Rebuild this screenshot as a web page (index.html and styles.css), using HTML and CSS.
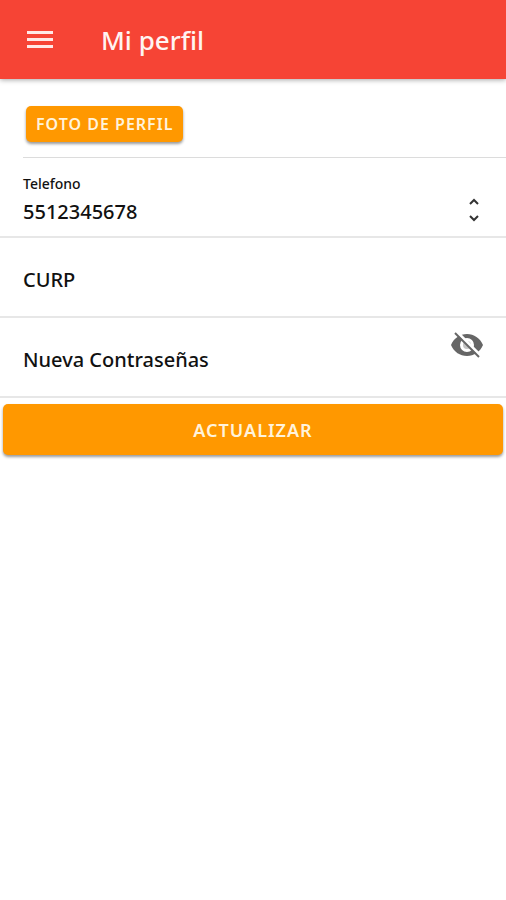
FILE: index.html
```html
<!DOCTYPE html>
<html lang="es">
<head>
<meta charset="utf-8">
<meta name="viewport" content="width=device-width, initial-scale=1">
<title>Mi perfil</title>
<link rel="stylesheet" href="styles.css">
</head>
<body>
<header class="toolbar">
  <button class="icon-button" type="button" aria-label="Menú">
    <svg width="26" height="18" viewBox="0 0 26 18" fill="currentColor" aria-hidden="true"><path d="M0 0h26v3H0zM0 7h26v3H0zM0 14h26v3H0z"/></svg>
  </button>
  <h1 class="title">Mi perfil</h1>
</header>
<main>
  <form>
    <div class="photo-row">
      <button class="button button-small" type="button">FOTO DE PERFIL</button>
    </div>
    <div class="row">
      <div class="stacked">
        <label class="caption" for="phone">Telefono</label>
        <input class="field" id="phone" type="text" inputmode="tel" value="5512345678">
      </div>
      <div class="stepper">
        <button class="icon-button" type="button" aria-label="Subir"><svg width="12" height="8" viewBox="0 0 12 8" aria-hidden="true"><path class="chevron" d="M2 6l4-4 4 4"/></svg></button>
        <button class="icon-button" type="button" aria-label="Bajar"><svg width="12" height="8" viewBox="0 0 12 8" aria-hidden="true"><path class="chevron" d="M2 2l4 4 4-4"/></svg></button>
      </div>
    </div>
    <div class="row">
      <label class="label" for="curp">CURP</label>
      <input class="field" id="curp" type="text">
    </div>
    <div class="row">
      <label class="label" for="password">Nueva Contraseñas</label>
      <input class="field" id="password" type="password">
      <button class="icon-button eye" type="button" aria-label="Mostrar contraseña">
        <svg width="32" height="28" viewBox="0 0 32 28" aria-hidden="true">
          <path fill="currentColor" fill-rule="evenodd" d="M0 14C3 7 9 3 16 3s13 4 16 11c-3 7-9 11-16 11S3 21 0 14zM16 7a7 7 0 1 0 0 14 7 7 0 0 0 0-14z"/>
          <circle cx="16" cy="14" r="4" fill="#c4c4c4"/>
          <path stroke="#fff" stroke-width="3" d="M6 1l24 24"/>
          <path stroke="currentColor" stroke-width="2" d="M4 2l24 24"/>
        </svg>
      </button>
    </div>
    <div class="actions">
      <button class="button button-block" type="submit">ACTUALIZAR</button>
    </div>
  </form>
</main>
</body>
</html>
```
FILE: styles.css
```css
* { box-sizing: border-box; }
body {
  margin: 0;
  background: #fff;
  color: #111;
  font-family: "Noto Sans", "Open Sans", sans-serif;
  font-weight: 500;
}
.toolbar {
  display: flex;
  align-items: center;
  gap: 48px;
  height: 79px;
  padding: 1px 27px 0;
  background: #f64435;
  color: #ffe9e6;
  box-shadow: 0 1px 5px rgba(0, 0, 0, .35);
}
.title { margin: 0; font-size: 26px; line-height: 32px; font-weight: 500; color: #fff4f2; }
.icon-button {
  display: flex;
  padding: 0;
  border: 0;
  background: none;
  color: inherit;
}
.photo-row {
  display: flex;
  align-items: center;
  height: 79px;
  margin-left: 23px;
  padding: 12px 3px 0;
  border-bottom: 1px solid #dcdcdc;
}
.button {
  border: 0;
  border-radius: 5px;
  background: #ff9800;
  color: #fff3dc;
  font-family: inherit;
  font-weight: 600;
  letter-spacing: 1px;
  white-space: nowrap;
  box-shadow: 0 2px 3px rgba(0, 0, 0, .4);
}
.button-small { height: 36px; padding: 0 10px; font-size: 16px; }
.button-block { width: 100%; height: 51px; font-size: 18px; }
.row {
  display: flex;
  align-items: center;
  height: 80px;
  padding: 6px 23px 0;
  border-bottom: 2px solid #e7e7e7;
}
.stacked { display: flex; flex: 1; flex-direction: column; min-width: 0; }
.caption { font-size: 14px; line-height: 24px; }
.label { font-size: 20px; line-height: 32px; }
.field {
  flex: 1;
  min-width: 0;
  padding: 0;
  border: 0;
  outline: 0;
  background: none;
  color: inherit;
  font: inherit;
  font-size: 20px;
  line-height: 32px;
}
.stepper { display: flex; flex-direction: column; gap: 8px; margin: 20px 3px 0; }
.chevron { fill: none; stroke: #333; stroke-width: 2; }
.eye { align-self: flex-start; margin-top: 7px; color: #666; }
.actions { padding: 6px 3px; }
```
